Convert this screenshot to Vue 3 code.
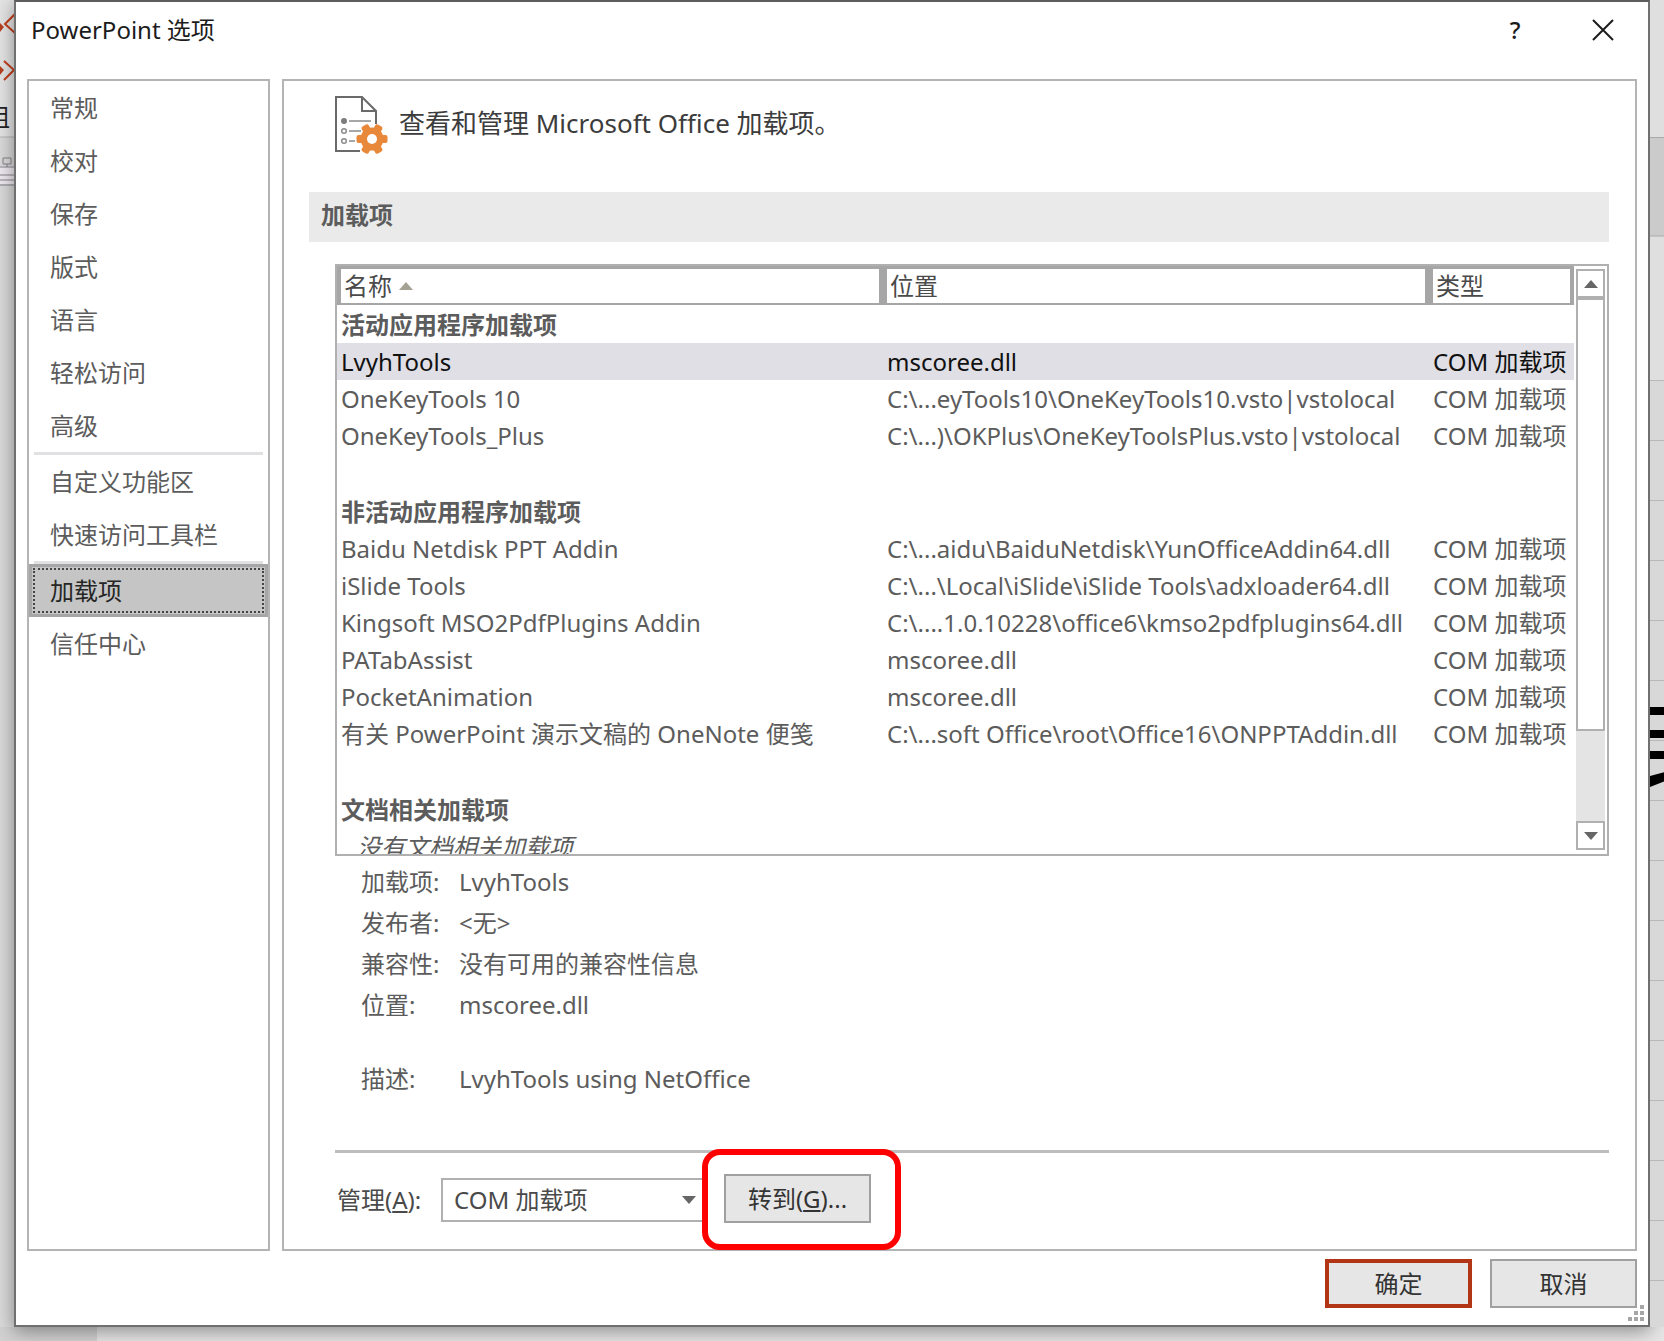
<script setup>
import { ref } from 'vue'

const navGroups = [
  ['常规', '校对', '保存', '版式', '语言', '轻松访问', '高级'],
  ['自定义功能区', '快速访问工具栏'],
  ['加载项', '信任中心'],
]
const activeNav = ref('加载项')

const com = 'COM 加载项'
const groups = [
  {
    title: '活动应用程序加载项',
    items: [
      { name: 'LvyhTools', location: 'mscoree.dll', type: com },
      { name: 'OneKeyTools 10', location: 'C:\\...eyTools10\\OneKeyTools10.vsto|vstolocal', type: com },
      { name: 'OneKeyTools_Plus', location: 'C:\\...)\\OKPlus\\OneKeyToolsPlus.vsto|vstolocal', type: com },
    ],
  },
  {
    title: '非活动应用程序加载项',
    items: [
      { name: 'Baidu Netdisk PPT Addin', location: 'C:\\...aidu\\BaiduNetdisk\\YunOfficeAddin64.dll', type: com },
      { name: 'iSlide Tools', location: 'C:\\...\\Local\\iSlide\\iSlide Tools\\adxloader64.dll', type: com },
      { name: 'Kingsoft MSO2PdfPlugins Addin', location: 'C:\\....1.0.10228\\office6\\kmso2pdfplugins64.dll', type: com },
      { name: 'PATabAssist', location: 'mscoree.dll', type: com },
      { name: 'PocketAnimation', location: 'mscoree.dll', type: com },
      { name: '有关 PowerPoint 演示文稿的 OneNote 便笺', location: 'C:\\...soft Office\\root\\Office16\\ONPPTAddin.dll', type: com },
    ],
  },
  { title: '文档相关加载项', items: [], empty: '没有文档相关加载项' },
]
const selected = ref('LvyhTools')

const details = [
  { label: '加载项:', value: 'LvyhTools' },
  { label: '发布者:', value: '<无>' },
  { label: '兼容性:', value: '没有可用的兼容性信息' },
  { label: '位置:', value: 'mscoree.dll' },
  { label: '描述:', value: 'LvyhTools using NetOffice', spaced: true },
]
const manage = ref(com)
</script>

<template>
  <div class="desktop">
    <div class="edge edge-left">
      <svg class="edge-art" width="16" height="200" viewBox="0 0 16 200" aria-hidden="true">
        <g fill="none" stroke="#c43e1c" stroke-width="2">
          <path d="M15 14 5 24l10 9" />
          <path d="M4 61l10 9-10 10" />
        </g>
        <path d="M0 23l4 4-4 5zM0 66l4 4-4 5z" fill="#b8401f" />
        <path d="M0 137h16" stroke="#b5b5b5" />
        <path d="M0 166h16v18H0z" fill="#eee9f0" />
        <path d="M3 158h8v6H3zM7 164v3M0 167h16M0 175h16M0 180h16M0 185h16" fill="none" stroke="#85818a" />
      </svg>
      <span class="edge-label">组</span>
    </div>

    <main class="dialog">
      <header class="titlebar">
        <h1>PowerPoint 选项</h1>
        <button class="title-button" type="button" aria-label="帮助">?</button>
        <button class="title-button" type="button" aria-label="关闭">
          <svg width="22" height="22" viewBox="0 0 22 22"><path d="M1 1l20 20M21 1L1 21" stroke="#1c1c1c" stroke-width="2" /></svg>
        </button>
      </header>

      <div class="panels">
        <nav class="nav">
          <ul v-for="(group, i) in navGroups" :key="i">
            <li v-for="item in group" :key="item">
              <button type="button" :class="{ active: item === activeNav }" @click="activeNav = item">{{ item }}</button>
            </li>
          </ul>
        </nav>

        <section class="content">
          <div class="intro">
            <svg width="54" height="60" viewBox="0 0 54 60" aria-hidden="true">
              <path d="M25 55H1V1h26l14 14v13M27 1v14h14" fill="none" stroke="#6a6a6a" stroke-width="2" />
              <circle cx="9" cy="25" r="3" fill="#7c7c7c" />
              <g fill="none" stroke="#8a8a8a" stroke-width="1.5">
                <circle cx="9" cy="35" r="2.3" /><circle cx="9" cy="45" r="2.3" />
                <path d="M14 25h22M14 35h12M14 45h6" />
              </g>
              <g fill="#e8883a" transform="translate(37 43)">
                <circle r="11.5" />
                <rect v-for="a in [0, 60, 120]" :key="a" x="-15.5" y="-4" width="31" height="8" rx="2" :transform="`rotate(${a})`" />
                <circle r="5" fill="#fff" />
              </g>
            </svg>
            <p>查看和管理 Microsoft Office 加载项。</p>
          </div>

          <h2>加载项</h2>

          <div class="body">
            <div class="listbox">
              <div class="list-view">
                <table>
                  <colgroup><col /><col /><col class="type-col" /></colgroup>
                  <thead>
                    <tr>
                      <th scope="col">名称<span class="sort-arrow"></span></th>
                      <th scope="col">位置</th>
                      <th scope="col">类型</th>
                    </tr>
                  </thead>
                  <tbody v-for="group in groups" :key="group.title">
                    <tr class="group-row"><th colspan="3" scope="rowgroup">{{ group.title }}</th></tr>
                    <tr
                      v-for="item in group.items"
                      :key="item.name"
                      :class="{ selected: item.name === selected }"
                      @click="selected = item.name"
                    >
                      <td>{{ item.name }}</td>
                      <td>{{ item.location }}</td>
                      <td>{{ item.type }}</td>
                    </tr>
                    <tr v-if="group.empty" class="empty-row"><td colspan="3">{{ group.empty }}</td></tr>
                    <tr v-else class="gap-row"><td colspan="3"></td></tr>
                  </tbody>
                </table>
              </div>
              <div class="scrollbar">
                <button type="button" aria-label="向上滚动"><span class="arrow up"></span></button>
                <div class="thumb"></div>
                <div class="track"></div>
                <button type="button" aria-label="向下滚动"><span class="arrow down"></span></button>
              </div>
            </div>

            <dl class="details">
              <div v-for="row in details" :key="row.label" :class="{ spaced: row.spaced }">
                <dt>{{ row.label }}</dt>
                <dd>{{ row.value }}</dd>
              </div>
            </dl>

            <div class="manage">
              <label for="manage-kind">管理(<u>A</u>):</label>
              <div class="select-wrap">
                <select id="manage-kind" v-model="manage"><option>COM 加载项</option></select>
                <span class="arrow down"></span>
              </div>
              <div class="highlight">
                <button class="push" type="button">转到(<u>G</u>)...</button>
              </div>
            </div>
          </div>
        </section>
      </div>

      <footer class="footer">
        <button class="push primary" type="button">确定</button>
        <button class="push" type="button">取消</button>
      </footer>
      <svg class="grip" width="16" height="16" viewBox="0 0 16 16" fill="#a6a6a6" aria-hidden="true">
        <path d="M12 0h4v4h-4zM12 6h4v4h-4zM6 6h4v4H6zM12 12h4v4h-4zM6 12h4v4H6zM0 12h4v4H0z" />
      </svg>
    </main>

    <div class="edge edge-right">
      <svg class="edge-art" width="15" height="800" viewBox="0 0 15 800" aria-hidden="true">
        <path d="M0 0h15v380H0z" fill="#dfdfdf" />
        <path d="M0 137h15v99H0z" fill="#cbcbcb" />
        <path d="M0 137.500h15M0 236h15" stroke="#aaa" />
        <path d="M0 707h15v8H0zM0 730h15v8H0zM0 751h15v8H0zM0 776l15-4v9L0 787z" fill="#000" />
      </svg>
    </div>
  </div>
</template>

<style>
body {
  margin: 0;
}
</style>

<style scoped>
* {
  box-sizing: border-box;
}

.desktop {
  display: grid;
  grid-template-columns: 14px minmax(0, 1fr) 14px;
  min-height: 100vh;
  overflow: hidden;
  padding-bottom: 14px;
  background: linear-gradient(#d2d2d2, #d2d2d2) left bottom / 97px 15px no-repeat, #e6e6e6;
  color: #5c5c5c;
  font-family: "Noto Sans", "Noto Sans CJK SC", sans-serif;
  font-size: 24px;
  line-height: 37px;
}

button,
select {
  font: inherit;
  color: inherit;
}

.edge {
  position: relative;
  overflow: hidden;
}

.edge-left {
  background: linear-gradient(#e4e4e4 137px, #dadada 137px);
}

.edge-right {
  background: repeating-linear-gradient(#d8d8d8 0 20px, #b8b8b8 20px 21px, #d8d8d8 21px 60px);
}

.edge-art {
  display: block;
}

.edge-label {
  position: absolute;
  top: 98px;
  right: 4px;
  color: #222;
}

.dialog {
  position: relative;
  display: flex;
  flex-direction: column;
  padding: 0 11px 17px;
  border: 2px solid #707070;
  border-top-color: #5c5c5c;
  background: #fff;
  box-shadow: 0 4px 18px rgba(0, 0, 0, 0.4);
}

.titlebar {
  display: flex;
  align-items: center;
  height: 55px;
  margin-bottom: 22px;
  padding-left: 4px;
  color: #1c1c1c;
}

h1 {
  flex: 1;
  margin: 0;
  font-size: 24px;
  font-weight: 400;
}

.title-button {
  display: grid;
  place-items: center;
  width: 88px;
  height: 54px;
  padding: 0;
  border: 0;
  background: none;
  font-weight: 500;
}

.title-button:last-child {
  margin-right: -10px;
}

.panels {
  display: flex;
  flex: 1;
  gap: 12px;
}

.nav {
  flex: none;
  width: 243px;
  border: 2px solid #b4b4b4;
}

.nav ul {
  margin: 0;
  padding: 0;
  list-style: none;
}

.nav ul + ul::before {
  content: "";
  display: block;
  height: 3px;
  margin: 0 5px;
  background: #e1e1e3;
}

.nav button {
  display: block;
  width: 100%;
  height: 53px;
  padding: 0 0 0 21px;
  border: 0;
  background: none;
  text-align: left;
}

.nav button.active {
  padding-left: 18px;
  border: 3px solid #a6a6a6;
  outline: 2px dotted #444;
  outline-offset: -6px;
  background: #c5c5c5;
  color: #262626;
}

.content {
  flex: 1;
  min-width: 0;
  padding: 15px 26px 0 25px;
  border: 2px solid #b4b4b4;
}

.intro {
  display: flex;
  gap: 10px;
  height: 96px;
  padding-left: 26px;
  color: #3c3c3c;
  font-size: 26px;
}

.intro p {
  margin: 9px 0 0;
}

h2 {
  height: 50px;
  margin: 0 0 22px;
  padding: 4px 12px;
  background: #eaeaea;
  font-size: 24px;
  font-weight: 600;
}

.body {
  padding-left: 26px;
}

.listbox {
  display: flex;
  height: 592px;
  border: 2px solid #b0b0b0;
}

.list-view {
  flex: 1;
  overflow: hidden;
}

table {
  width: 100%;
  table-layout: fixed;
  border-collapse: separate;
  border-spacing: 0;
  white-space: nowrap;
}

.type-col {
  width: 145px;
}

thead th {
  height: 39px;
  padding: 0 3px;
  border: solid #a6a6a6;
  border-width: 3px 4px 2px;
  font-weight: 400;
  line-height: 34px;
  text-align: left;
  color: #4a4a4a;
}

.sort-arrow {
  display: inline-block;
  margin-left: 7px;
  border: 7px solid transparent;
  border-top: 0;
  border-bottom: 8px solid #a5a293;
  vertical-align: 5px;
}

tbody td,
tbody th {
  height: 37px;
  padding: 0 0 0 4px;
  text-align: left;
}

.group-row th,
.gap-row td {
  height: 38px;
  font-weight: 700;
}

.selected td {
  background: #dfdfe5;
  color: #111;
}

.empty-row td {
  padding-left: 20px;
  font-style: italic;
}

.scrollbar {
  display: flex;
  flex: none;
  flex-direction: column;
  width: 33px;
  padding: 3px 2px 4px;
}

.scrollbar button {
  display: grid;
  place-items: center;
  height: 29px;
  padding: 0;
  border: 2px solid #b0b0b0;
  background: #fff;
}

.thumb {
  height: 433px;
  border: 2px solid #b0b0b0;
}

.track {
  flex: 1;
  background: #e4e4e4;
}

.arrow {
  border: 7px solid transparent;
}

.arrow.up {
  border-top: 0;
  border-bottom: 8px solid #666;
}

.arrow.down {
  border-bottom: 0;
  border-top: 8px solid #666;
}

.details {
  margin: 5px 0 0;
  padding: 0 0 51px 26px;
  border-bottom: 3px solid #bdbdbd;
}

.details div {
  display: flex;
  line-height: 41px;
}

.details .spaced {
  margin-top: 33px;
}

dt {
  width: 98px;
}

dd {
  margin: 0;
}

.manage {
  display: flex;
  align-items: center;
  height: 93px;
}

.manage label {
  width: 106px;
  padding-left: 2px;
  color: #4a4a4a;
}

.select-wrap {
  position: relative;
  width: 264px;
}

.select-wrap select {
  display: block;
  width: 100%;
  height: 44px;
  padding: 0 11px;
  border: 2px solid #b0b0b0;
  border-radius: 0;
  appearance: none;
  background: #fff;
  color: #4a4a4a;
}

.select-wrap .arrow {
  position: absolute;
  top: 18px;
  right: 9px;
}

.highlight {
  position: relative;
  height: 101px;
  margin-left: -3px;
  padding: 19px 24px 0 16px;
  border: 6px solid #f00;
  border-radius: 18px;
  background: #fff;
}

.push {
  width: 147px;
  height: 49px;
  padding: 0;
  border: 2px solid #a0a0a0;
  background: #e6e6e6;
  color: #333;
}

.footer {
  display: flex;
  justify-content: flex-end;
  gap: 18px;
  margin-top: 8px;
}

.push.primary {
  border: 4px solid #b23615;
}

.grip {
  position: absolute;
  right: 4px;
  bottom: 4px;
}
</style>
